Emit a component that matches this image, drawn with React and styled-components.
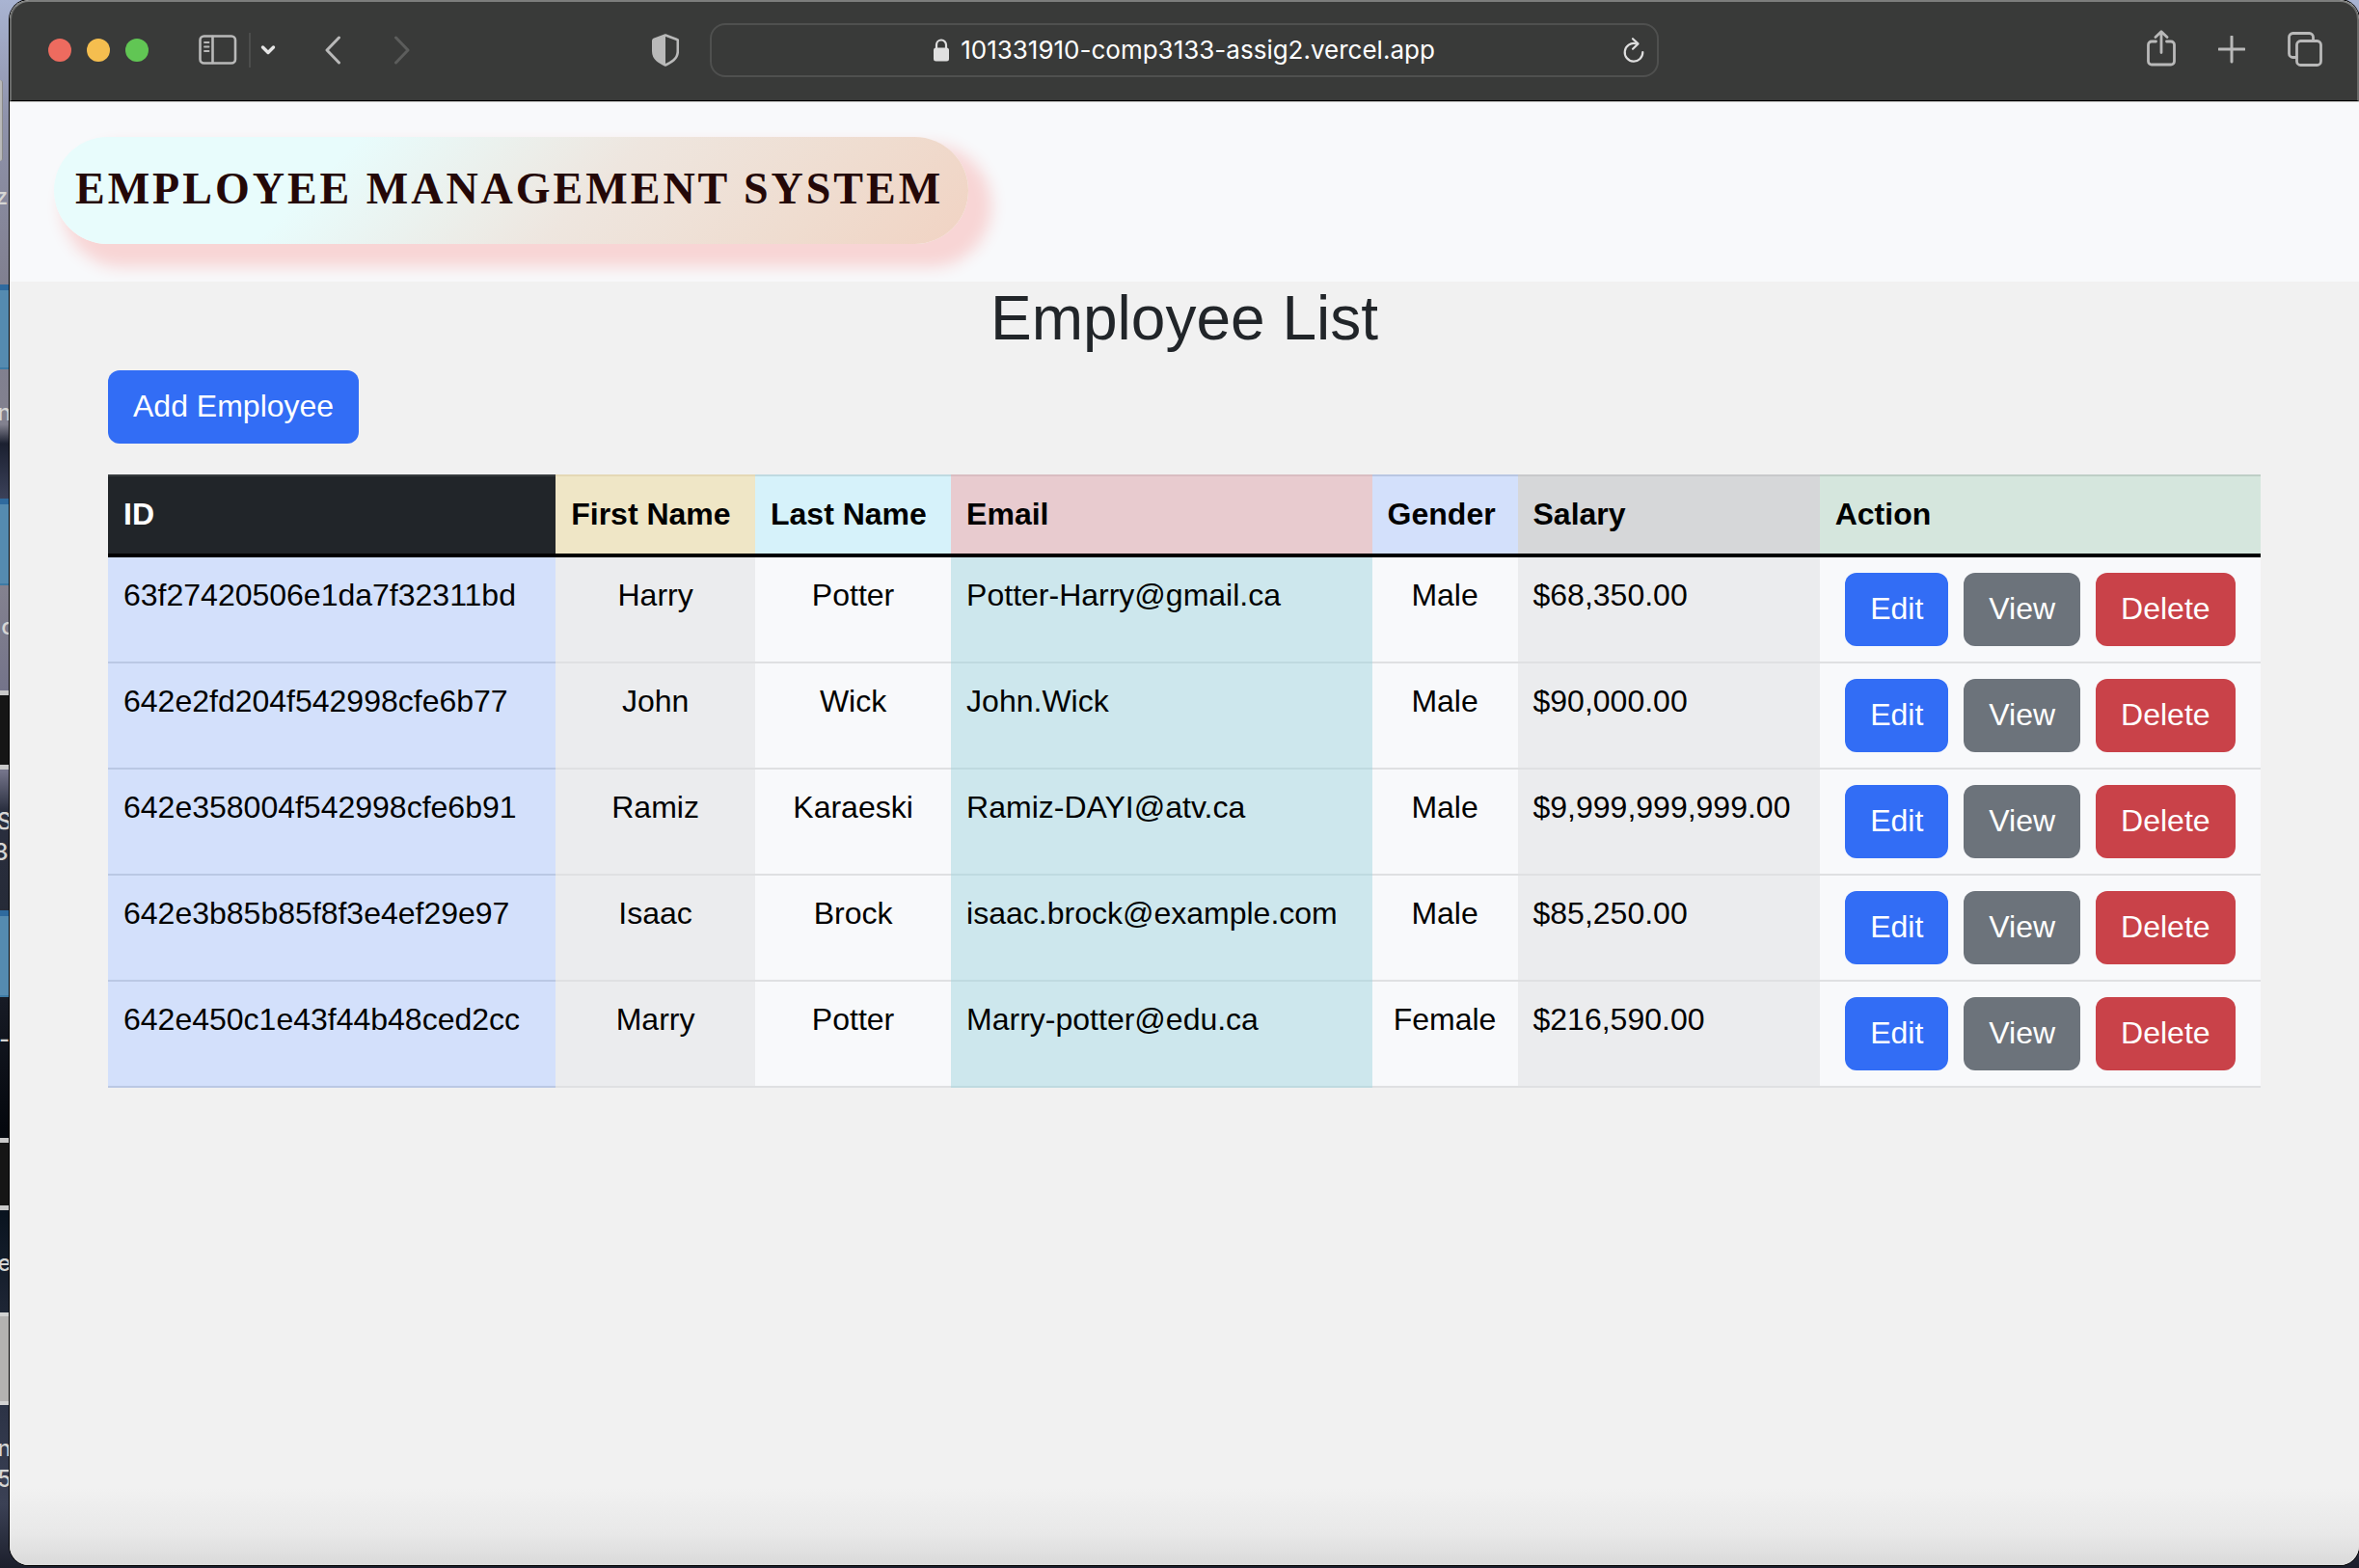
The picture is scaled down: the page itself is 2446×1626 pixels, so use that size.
import React from "react";
import styled, { createGlobalStyle, css } from "styled-components";

const GlobalStyle = createGlobalStyle`
  *, *::before, *::after { box-sizing: border-box; }
  body {
    margin: 0;
    font-family: "Liberation Sans", Arial, sans-serif;
    font-size: 32px;
    line-height: 48px;
    color: #212529;
  }
`;

/* ---------- desktop behind the window ---------- */

const Desktop = styled.div`
  position: relative;
  display: flex;
  min-height: 100vh;
  padding: 0 0 3px 10px;
  overflow: hidden;
  background: linear-gradient(
    180deg,
    #a9b4d2 0,
    #8f93ab 120px,
    #807f8f 300px,
    #82818f 440px,
    #1b2030 460px,
    #3a4058 515px,
    #84828f 608px,
    #74748a 715px,
    #74748a 800px,
    #2a2f3f 840px,
    #262b38 940px,
    #161a24 1040px,
    #05080e 1170px,
    #0a1420 1260px,
    #1c2433 1350px,
    #2c3346 1460px,
    #3b4155 1560px,
    #1c1f2c 1626px
  );
`;

const DesktopItem = styled.div`
  position: absolute;
  left: 0;
  top: ${(p) => p.$top}px;
  width: ${(p) => (p.$kind === "window" ? 3 : 9)}px;
  height: ${(p) => p.$height}px;
  ${(p) => p.$kind === "folder" && css`
    background: #558bb0;
    border-top: 6px solid #2f6a9e;
    border-bottom: 2px solid #3d7ba5;
  `}
  ${(p) => p.$kind === "window" && css`
    background: #b9b9b9;
    border-right: 1px solid #8a8a8a;
    border-radius: 0 3px 3px 0;
  `}
  ${(p) => p.$kind === "dark" && css`
    background: #151515;
    border: solid #c9c9c9;
    border-width: 5px 0;
  `}
  ${(p) => p.$kind === "paper" && css`
    background: #b4b2b1;
    border: solid #d2d2d2;
    border-width: 4px 0;
  `}
`;

const DesktopLabel = styled.span`
  position: absolute;
  left: 0;
  top: ${(p) => p.$top}px;
  display: flex;
  justify-content: center;
  width: 9px;
  overflow: hidden;
  white-space: nowrap;
  font: 500 24px/28px Inter, sans-serif;
  color: #d6d6d4;
`;

/* ---------- browser window ---------- */

const Window = styled.div`
  position: relative;
  flex: 1;
  min-width: 0;
  display: flex;
  flex-direction: column;
  overflow: hidden;
  border-radius: 20px;
  background: #f1f1f1;
  box-shadow: 0 0 0 1px #000;
`;

const Toolbar = styled.header`
  display: grid;
  grid-template-columns: 1fr minmax(0, 984px) 1fr;
  align-items: center;
  height: 105px;
  padding: 0 36px 2px;
  background: #393a39;
  border: 2px solid #6a6b6a;
  border-top-color: #7c7d7c;
  border-bottom: 1px solid #000;
  border-radius: 20px 20px 0 0;
`;

const ToolGroup = styled.div`
  display: flex;
  align-items: center;
  gap: ${(p) => p.$gap}px;
`;

const LeftTools = styled.div`
  display: flex;
  align-items: center;
  padding: 0 32px 0 2px;
`;

const RightTools = styled.div`
  display: flex;
  align-items: center;
  justify-content: flex-end;
  gap: 44px;
`;

const SidebarTools = styled.div`
  display: flex;
  align-items: center;
  margin-left: 52px;
`;

const HistoryTools = styled.div`
  display: flex;
  align-items: center;
  gap: 54px;
  margin: 0 auto 0 50px;
`;

const TrafficLight = styled.button`
  width: 24px;
  height: 24px;
  padding: 0;
  border: 0;
  border-radius: 50%;
  background: ${(p) => p.$color};
`;

const IconButton = styled.button`
  display: flex;
  padding: 0;
  border: 0;
  background: none;
  color: ${(p) => p.$color || "#b9b9b9"};
  svg { display: block; }
`;

const Divider = styled.span`
  width: 2px;
  height: 36px;
  margin: 0 10px 0 12px;
  background: #4c4d4c;
`;

const AddressBar = styled.div`
  display: grid;
  grid-template-columns: 24px 1fr 24px;
  align-items: center;
  height: 56px;
  padding: 0 12px;
  border: 2px solid #4f504f;
  border-radius: 16px;
`;

const AddressText = styled.label`
  grid-column: 2;
  display: flex;
  align-items: center;
  justify-content: center;
  gap: 12px;
  color: #e0e0e0;
`;

const AddressInput = styled.input`
  field-sizing: content;
  padding: 0;
  border: 0;
  outline: 0;
  background: none;
  font: 400 26px/32px Inter, "Liberation Sans", sans-serif;
  color: #fff;
`;

/* ---------- page ---------- */

const Navbar = styled.nav`
  display: flex;
  padding: 36px 46px 39px;
  border-top: 1px solid #c9cac8;
  background: #f8f9fb;
`;

const Brand = styled.a`
  padding: 0 26px 4px 22px;
  border-radius: 56px;
  background: linear-gradient(135deg, #e8fcfc 30%, #eee6df 58%, #efdccf 82%, #f1d3c3 100%);
  box-shadow: 16px 16px 16px 8px #f8d5d5;
  font: bold 46px/107px "Liberation Serif", "Times New Roman", serif;
  letter-spacing: 3px;
  text-decoration: none;
  white-space: nowrap;
  color: #240808;
`;

const Main = styled.main`
  flex: 1;
  padding: 0 102px 80px;
  background: linear-gradient(0deg, #dadada 0, #e8e8e8 32px, #f1f1f1 80px);
`;

const Title = styled.h1`
  margin: 0 0 16px;
  font-size: 64px;
  line-height: 76px;
  font-weight: 400;
  text-align: center;
`;

const tones = { primary: "#326df5", secondary: "#6c737b", danger: "#c94249" };

const Button = styled.button`
  display: block;
  padding: 13px 26px 15px;
  border: 0;
  border-radius: 12px;
  background: ${(p) => tones[p.$tone]};
  font: inherit;
  color: #fff;
`;

const Table = styled.table`
  width: 100%;
  margin-top: 32px;
  border-collapse: separate;
  border-spacing: 0;
  color: #000;
`;

const HeadCell = styled.th`
  padding: 15px 16px 17px;
  border-top: 2px solid ${(p) => p.$line};
  border-bottom: 4px solid #000;
  background: ${(p) => p.$bg};
  color: ${(p) => p.$color || "#000"};
  text-align: left;
  white-space: nowrap;
`;

const Cell = styled.td`
  padding: 15px 16px 17px;
  border-bottom: 2px solid ${(p) => p.$line};
  background: ${(p) => p.$bg};
  text-align: ${(p) => p.$align || "left"};
  vertical-align: top;
`;

const ActionCell = styled(Cell)`
  padding: 16px;
`;

const Actions = styled.div`
  display: flex;
  justify-content: center;
  gap: 16px;
`;

const columns = [
  { key: "id", label: "ID", head: { $bg: "#212529", $line: "#373b3e", $color: "#fff" }, cell: { $bg: "#d3e0fb", $line: "#bac8e4" } },
  { key: "first", label: "First Name", head: { $bg: "#efe6c6", $line: "#e4d8b5" }, cell: { $bg: "#ebecee", $line: "#dfe0e2", $align: "center" } },
  { key: "last", label: "Last Name", head: { $bg: "#d6f2fa", $line: "#bfdae1" }, cell: { $bg: "#f8f9fb", $line: "#dfe0e2", $align: "center" } },
  { key: "email", label: "Email", head: { $bg: "#e8cbcf", $line: "#d9bdc1" }, cell: { $bg: "#cde7ed", $line: "#bfdae0" } },
  { key: "gender", label: "Gender", head: { $bg: "#d3e0fb", $line: "#b9c6e2" }, cell: { $bg: "#f8f9fb", $line: "#dfe0e2", $align: "center" } },
  { key: "salary", label: "Salary", head: { $bg: "#d6d7d9", $line: "#c8c9cb" }, cell: { $bg: "#ebecee", $line: "#dfe0e2" } },
];
const actionColumn = { head: { $bg: "#d5e6dd", $line: "#becec6" }, cell: { $bg: "#f8f9fb", $line: "#dfe0e2" } };

const employees = [
  { id: "63f27420506e1da7f32311bd", first: "Harry", last: "Potter", email: "Potter-Harry@gmail.ca", gender: "Male", salary: "$68,350.00" },
  { id: "642e2fd204f542998cfe6b77", first: "John", last: "Wick", email: "John.Wick", gender: "Male", salary: "$90,000.00" },
  { id: "642e358004f542998cfe6b91", first: "Ramiz", last: "Karaeski", email: "Ramiz-DAYI@atv.ca", gender: "Male", salary: "$9,999,999,999.00" },
  { id: "642e3b85b85f8f3e4ef29e97", first: "Isaac", last: "Brock", email: "isaac.brock@example.com", gender: "Male", salary: "$85,250.00" },
  { id: "642e450c1e43f44b48ced2cc", first: "Marry", last: "Potter", email: "Marry-potter@edu.ca", gender: "Female", salary: "$216,590.00" },
];

const desktopItems = [
  { kind: "window", top: 83, height: 84 },
  { kind: "folder", top: 295, height: 88 },
  { kind: "folder", top: 517, height: 90 },
  { kind: "dark", top: 716, height: 82 },
  { kind: "folder", top: 944, height: 90 },
  { kind: "dark", top: 1180, height: 75 },
  { kind: "paper", top: 1361, height: 96 },
];

const desktopLabels = [
  { text: "zi", top: 190 },
  { text: "n", top: 414 },
  { text: ".c", top: 636 },
  { text: "S", top: 838 },
  { text: "3.", top: 870 },
  { text: "-", top: 1064 },
  { text: "e", top: 1296 },
  { text: "n", top: 1488 },
  { text: "5", top: 1520 },
];

/* ---------- icons ---------- */

const Svg = ({ w, h, sw = 3, children }) => (
  <svg width={w} height={h} viewBox={`0 0 ${w} ${h}`} fill="none" stroke="currentColor" strokeWidth={sw} strokeLinecap="round" strokeLinejoin="round" aria-hidden="true">
    {children}
  </svg>
);

const SidebarIcon = () => (
  <Svg w={40} h={32} sw={2.6}>
    <rect x="1.5" y="1.5" width="36.5" height="28" rx="4" />
    <path d="M14.5 2v27" />
    <path d="M6 8h4.5M6 12.5h4.5M6 17h4.5" strokeWidth="1.8" />
  </Svg>
);
const DownIcon = () => <Svg w={16} h={12} sw={3.4}><path d="M2.5 3l5.5 5.5L13.500 3" /></Svg>;
const BackIcon = () => <Svg w={18} h={30}><path d="M15.5 2L3 15l12.5 13" /></Svg>;
const ForwardIcon = () => <Svg w={18} h={30}><path d="M2.5 2L15 15 2.5 28" /></Svg>;
const ShieldIcon = () => (
  <Svg w={28} h={34} sw={2.6}>
    <path d="M14 1.5L26 6c.6.2.8.6.8 1.2V18c0 4-1.4 6.8-4.2 9.2C20 29.5 17 31 14 32.5 11 31 8 29.5 5.4 27.2 2.6 24.8 1.3 22 1.3 18V7.2C1.3 6.6 1.5 6.2 2 6z" />
    <path d="M14 1.5V32.5C11 31 8 29.5 5.4 27.2 2.6 24.8 1.3 22 1.3 18V7.2L2 6z" fill="currentColor" stroke="none" />
  </Svg>
);
const LockIcon = () => (
  <Svg w={16} h={24} sw={2.2}>
    <path d="M3 11V6.5a5 5 0 0 1 10 0V11" />
    <rect x="0" y="9.5" width="16" height="14" rx="2.5" fill="currentColor" stroke="none" />
  </Svg>
);
const ReloadIcon = () => (
  <Svg w={24} h={28} sw={2.2}>
    <path d="M14 7.2A9.3 9.3 0 1 0 21.3 16" />
    <path d="M11 2.2l5.5 5.2-5.5 5.3" />
  </Svg>
);
const ShareIcon = () => (
  <Svg w={30} h={42} sw={2.8}>
    <path d="M9.5 12H5a3.500 3.500 0 0 0-3.500 3.500v17A3.500 3.500 0 0 0 5 36h20a3.500 3.500 0 0 0 3.500-3.500v-17A3.500 3.500 0 0 0 25 12h-4.500" />
    <path d="M15 23.500V2M9 7.500L15 1.800l6 5.700" />
  </Svg>
);
const PlusIcon = () => <Svg w={28} h={30}><path d="M14 1v26M1 14h26" /></Svg>;
const TabsIcon = () => (
  <Svg w={36} h={38} sw={2.8}>
    <rect x="9.5" y="9.5" width="25" height="25" rx="4" />
    <path d="M9 26.500H5.500a4 4 0 0 1-4-4V5.500a4 4 0 0 1 4-4h17a4 4 0 0 1 4 4V9" />
  </Svg>
);

export default function App() {
  return (
    <>
      <GlobalStyle />
      <Desktop>
        {desktopItems.map((d) => (
          <DesktopItem key={d.top} $kind={d.kind} $top={d.top} $height={d.height} />
        ))}
        {desktopLabels.map((d) => (
          <DesktopLabel key={d.top} $top={d.top}>{d.text}</DesktopLabel>
        ))}
        <Window>
          <Toolbar>
            <LeftTools>
              <ToolGroup $gap={16}>
                <TrafficLight $color="#ed6b5f" aria-label="Close" />
                <TrafficLight $color="#f5be4f" aria-label="Minimize" />
                <TrafficLight $color="#61c654" aria-label="Zoom" />
              </ToolGroup>
              <SidebarTools>
                <IconButton aria-label="Sidebar"><SidebarIcon /></IconButton>
                <Divider />
                <IconButton $color="#e6e6e6" aria-label="Tab groups"><DownIcon /></IconButton>
              </SidebarTools>
              <HistoryTools>
                <IconButton aria-label="Back"><BackIcon /></IconButton>
                <IconButton $color="#5c5d5c" aria-label="Forward"><ForwardIcon /></IconButton>
              </HistoryTools>
              <IconButton aria-label="Privacy report"><ShieldIcon /></IconButton>
            </LeftTools>
            <AddressBar>
              <AddressText>
                <LockIcon />
                <AddressInput aria-label="Address" defaultValue="101331910-comp3133-assig2.vercel.app" />
              </AddressText>
              <IconButton $color="#dedede" aria-label="Reload"><ReloadIcon /></IconButton>
            </AddressBar>
            <RightTools>
              <IconButton aria-label="Share"><ShareIcon /></IconButton>
              <IconButton aria-label="New tab"><PlusIcon /></IconButton>
              <IconButton aria-label="Tab overview"><TabsIcon /></IconButton>
            </RightTools>
          </Toolbar>
          <Navbar>
            <Brand href="#">EMPLOYEE MANAGEMENT SYSTEM</Brand>
          </Navbar>
          <Main>
            <Title>Employee List</Title>
            <Button $tone="primary">Add Employee</Button>
            <Table>
              <thead>
                <tr>
                  {columns.map((c) => (
                    <HeadCell key={c.key} {...c.head}>{c.label}</HeadCell>
                  ))}
                  <HeadCell {...actionColumn.head}>Action</HeadCell>
                </tr>
              </thead>
              <tbody>
                {employees.map((e) => (
                  <tr key={e.id}>
                    {columns.map((c) => (
                      <Cell key={c.key} {...c.cell}>{e[c.key]}</Cell>
                    ))}
                    <ActionCell {...actionColumn.cell}>
                      <Actions>
                        <Button $tone="primary">Edit</Button>
                        <Button $tone="secondary">View</Button>
                        <Button $tone="danger">Delete</Button>
                      </Actions>
                    </ActionCell>
                  </tr>
                ))}
              </tbody>
            </Table>
          </Main>
        </Window>
      </Desktop>
    </>
  );
}
